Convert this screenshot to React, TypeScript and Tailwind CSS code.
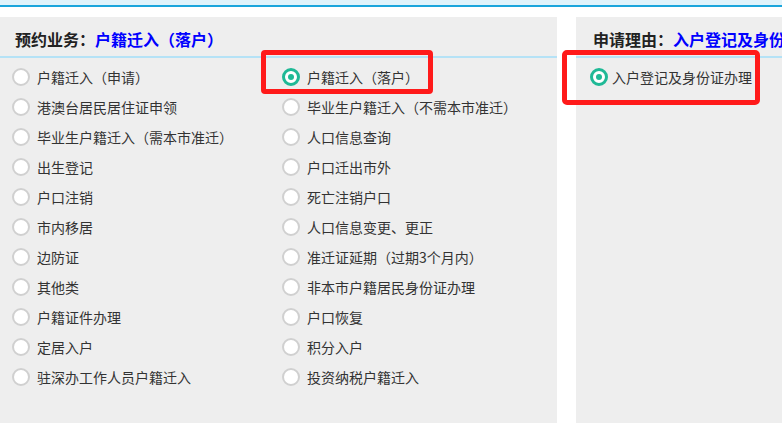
import React from "react";

const LEFT: [string, string][] = [
  ["户籍迁入（申请）", "户籍迁入（落户）"],
  ["港澳台居民居住证申领", "毕业生户籍迁入（不需本市准迁）"],
  ["毕业生户籍迁入（需本市准迁）", "人口信息查询"],
  ["出生登记", "户口迁出市外"],
  ["户口注销", "死亡注销户口"],
  ["市内移居", "人口信息变更、更正"],
  ["边防证", "准迁证延期（过期3个月内）"],
  ["其他类", "非本市户籍居民身份证办理"],
  ["户籍证件办理", "户口恢复"],
  ["定居入户", "积分入户"],
  ["驻深办工作人员户籍迁入", "投资纳税户籍迁入"],
];

function Radio({ checked }: { checked?: boolean }) {
  if (checked) {
    return (
      <span className="flex h-[18px] w-[18px] shrink-0 items-center justify-center rounded-full border-[3px] border-[#1fb996] bg-white">
        <span className="h-[6px] w-[6px] rounded-full bg-[#1fb996]" />
      </span>
    );
  }
  return <span className="h-[18px] w-[18px] shrink-0 rounded-full border-2 border-[#d0d0d0] bg-white" />;
}

function Item({ label, checked }: { label: string; checked?: boolean }) {
  return (
    <div className="flex h-[30px] items-center gap-[7px]">
      <Radio checked={checked} />
      <span className="whitespace-nowrap text-[14px] text-[#333]">{label}</span>
    </div>
  );
}

export default function App() {
  const rows = LEFT.flat();
  return (
    <div
      className="relative h-[423px] w-[782px] overflow-hidden bg-white"
      style={{ fontFamily: '"Noto Sans CJK SC", "Microsoft YaHei", sans-serif' }}
    >
      {/* top bar */}
      <div className="h-[7px] border-b-2 border-[#1ba5dc] bg-[#e0f3fb]" />

      <div className="mt-[10px] flex h-[406px] gap-[19px]">
        {/* left panel */}
        <div className="w-[557px] shrink-0 bg-[#eeeeee]">
          <div className="flex h-[41px] items-center border-b-2 border-[#b5e2f6] pl-[15px] pt-[4px] text-[16px] font-bold">
            <span className="text-[#222]">预约业务：</span>
            <span className="text-[#0000ff]">户籍迁入（落户）</span>
          </div>
          <div className="grid grid-cols-[270px_270px] pl-[12px] pt-[4px]">
            {rows.map((r, i) => (
              <Item key={i} label={r} checked={i === 1} />
            ))}
          </div>
        </div>

        {/* right panel */}
        <div className="flex-1 bg-[#eeeeee]">
          <div className="flex h-[41px] items-center whitespace-nowrap border-b-2 border-[#b5e2f6] pl-[17px] pt-[4px] text-[16px] font-bold">
            <span className="text-[#222]">申请理由：</span>
            <span className="text-[#0000ff]">入户登记及身份证办理</span>
          </div>
          <div className="pl-[14px] pt-[4px]">
            <div className="flex h-[30px] items-center gap-[4px]">
              <Radio checked />
              <span className="whitespace-nowrap text-[14px] text-[#333]">入户登记及身份证办理</span>
            </div>
          </div>
        </div>
      </div>

      {/* red annotation boxes */}
      <div className="absolute left-[261px] top-[50px] h-[44px] w-[172px] rounded-[4px] border-[5px] border-[#ff1a1a]" />
      <div className="absolute left-[562px] top-[50px] h-[55px] w-[198px] rounded-[5px] border-[5px] border-[#ff1a1a]" />
    </div>
  );
}
